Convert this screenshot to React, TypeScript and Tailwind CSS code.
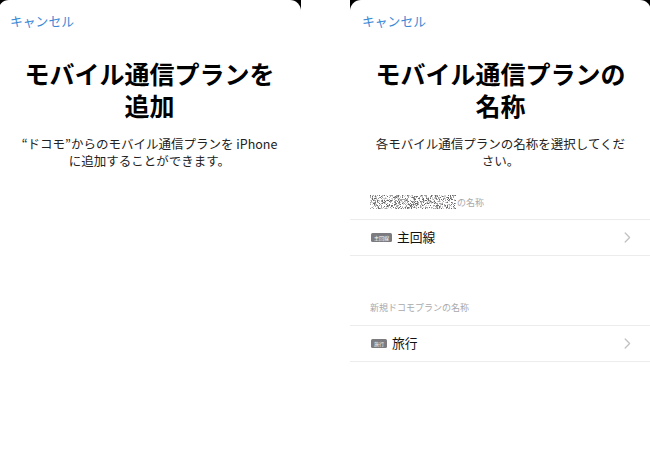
import type { ReactNode } from "react";

const FONT = '"Noto Sans CJK JP", "Noto Sans", sans-serif';

// censored block: deterministic pixel noise
const rand = (() => {
  let seed = 20240611;
  return () => {
    seed = (seed * 1103515245 + 12345) & 0x7fffffff;
    return seed / 0x7fffffff;
  };
})();

const noisePaths = (() => {
  const shades = ["", "", ""];
  for (let y = 0; y < 14; y++) {
    for (let x = 0; x < 86; x++) {
      const r = rand();
      const cell = `M${x} ${y}h1v1h-1z`;
      if (r < 0.16) shades[0] += cell;
      else if (r < 0.34) shades[1] += cell;
      else if (r < 0.5) shades[2] += cell;
    }
  }
  return shades;
})();

const Mosaic = () => (
  <svg width="86" height="14" viewBox="0 0 86 14" shapeRendering="crispEdges">
    <path d={noisePaths[0]} fill="#6b6b6b" />
    <path d={noisePaths[1]} fill="#a3a3a3" />
    <path d={noisePaths[2]} fill="#d2d2d2" />
  </svg>
);

const Chevron = () => (
  <svg width="7" height="11" viewBox="0 0 7 11" fill="none">
    <polyline points="1.2,1 5.6,5.5 1.2,10" stroke="#c2c2c6" strokeWidth="1.3" strokeLinecap="round" strokeLinejoin="round" />
  </svg>
);

const Screen = ({ children, className }: { children: ReactNode; className: string }) => (
  <div className={`bg-black ${className}`}>
    <div className="h-[450px] rounded-t-[11px] bg-white">{children}</div>
  </div>
);

const Header = ({ title1, title2, desc1, desc2 }: { title1: string; title2: string; desc1: string; desc2: string }) => (
  <>
    <div className="pl-[12px] pt-[12px] text-[12.8px] leading-[18px] text-[#3b89d6]">キャンセル</div>
    <h1 className="mt-[27px] text-center text-[25px] font-bold text-black">
      <div className="h-[32px] whitespace-nowrap leading-[32px]">{title1}</div>
      <div className="h-[32px] leading-[32px]">{title2}</div>
    </h1>
    <p className="mt-[14px] text-center text-[12.5px] text-[#222]">
      <span className="block h-[17px] whitespace-nowrap leading-[17px]">{desc1}</span>
      <span className="block h-[17px] leading-[17px]">{desc2}</span>
    </p>
  </>
);

const PlanRow = ({ badge, label, badgeWidth }: { badge: string; label: string; badgeWidth: string }) => (
  <div className="flex h-[37px] items-center border-y border-[#ececec] pl-[21px] pr-[20px]">
    <span
      className={`flex h-[9px] ${badgeWidth} items-center justify-center rounded-[1.5px] bg-[#7c7c80] text-[5px] leading-none text-white`}
    >
      {badge}
    </span>
    <span className="ml-[5px] text-[12.8px] leading-none text-[#111]">{label}</span>
    <span className="ml-auto flex">
      <Chevron />
    </span>
  </div>
);

export default function App() {
  return (
    <div className="flex h-[450px] w-[650px] overflow-hidden bg-white" style={{ fontFamily: FONT }}>
      <Screen className="ml-[-2px] w-[303px] shrink-0">
        <Header
          title1="モバイル通信プランを"
          title2="追加"
          desc1="“ドコモ”からのモバイル通信プランを iPhone"
          desc2="に追加することができます。"
        />
      </Screen>

      <div className="w-[49px] shrink-0" />

      <Screen className="w-[301px] shrink-0">
        <Header
          title1="モバイル通信プランの"
          title2="名称"
          desc1="各モバイル通信プランの名称を選択してくだ"
          desc2="さい。"
        />

        <div className="mt-[26px] flex h-[14px] items-center pl-[20px]">
          <Mosaic />
          <span className="ml-[1px] text-[9px] leading-none text-[#a9a9ad]">の名称</span>
        </div>
        <div className="mt-[10px]">
          <PlanRow badge="主回線" label="主回線" badgeWidth="w-[21px]" />
        </div>

        <div className="mt-[46px] pl-[20px] text-[9px] leading-[12px] text-[#a9a9ad]">新規ドコモプランの名称</div>
        <div className="mt-[11px]">
          <PlanRow badge="旅行" label="旅行" badgeWidth="w-[16px]" />
        </div>
      </Screen>
    </div>
  );
}
